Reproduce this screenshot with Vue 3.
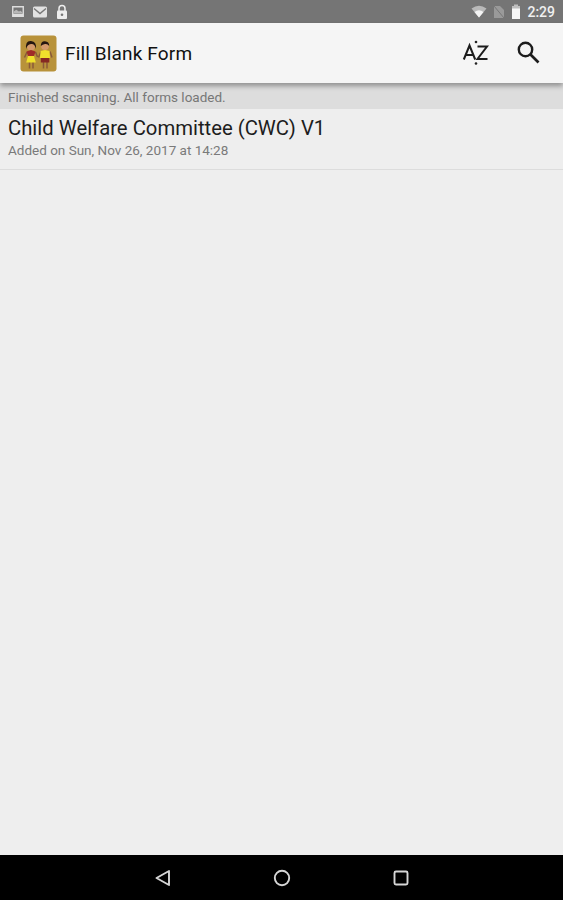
<template>
  <div class="screen">
    <div class="status-bar">
      <div class="status-left">
        <svg width="14" height="13" viewBox="0 0 16 14"><path d="M2 1.500h12v11H2z" fill="none" stroke="#dedede" stroke-width="1.600"/><path d="M3 7l3-2 3 2 2-1 2 2v1H3z" fill="#b8b8b8"/><path d="M2 9.500h12v3H2z" fill="#dedede"/></svg>
        <svg width="16" height="14" viewBox="0 0 16 14"><rect x="1" y="1.500" width="14" height="11" rx="1.500" fill="#e2e2e2"/><path d="M2 3.500l6 5 6-5" fill="none" stroke="#777" stroke-width="1.400"/></svg>
        <svg width="14" height="16" viewBox="0 0 14 16"><path d="M4 7V4.500a3 3 0 0 1 6 0V7" fill="none" stroke="#eee" stroke-width="1.500"/><rect x="2" y="6.500" width="10" height="8.500" rx="1" fill="#eee"/><circle cx="7" cy="10.700" r="1.300" fill="#777"/></svg>
      </div>
      <div class="status-right">
        <svg width="16" height="13" viewBox="0 0 16 13"><path d="M0.500 3.500Q8-2 15.500 3.500L8 12.500z" fill="#f0f0f0" opacity=".55"/><path d="M3.500 7Q8 3.500 12.500 7L8 12.500z" fill="#f4f4f4"/></svg>
        <svg width="12" height="14" viewBox="0 0 12 14"><path d="M1 13V1h6l4 4v8z" fill="#9a9a9a"/><path d="M1 1l10 12" stroke="#777" stroke-width="1"/></svg>
        <svg width="10" height="15" viewBox="0 0 10 15"><path d="M3 0.500h4V2h2v13H1V2h2z" fill="#bdbdbd"/><rect x="1" y="4.500" width="8" height="10.500" fill="#f6f6f6"/></svg>
        <span class="clock">2:29</span>
      </div>
    </div>

    <header class="toolbar">
      <div class="app-icon">
        <svg width="37" height="37" viewBox="0 0 37 37">
          <rect x="0.500" y="0.500" width="36" height="36" rx="3" fill="#b8923a"/>
          <path d="M9.500 27v6.500M13 27v6.500M7 17l-2.500 5.500M15.500 17l2 5" stroke="#8a5a38" stroke-width="1.500"/>
          <path d="M23.500 27v6.500M27 27v6.500M21 16.500l-2.500 6M30 16.500l2 6" stroke="#8a5a38" stroke-width="1.500"/>
          <circle cx="11" cy="11.500" r="4" fill="#d49a6c"/>
          <path d="M6.200 14Q5 5.500 11 6T15.800 14Q15 8.500 11 9T6.200 14z" fill="#241610"/>
          <path d="M6.500 16.500l4.500-1.500 4.500 1.500-1.500 4.500H8z" fill="#a02c28"/>
          <path d="M8 21h6l1.800 6.500h-9.600z" fill="#f0e02c"/>
          <circle cx="25" cy="11" r="3.900" fill="#d49a6c"/>
          <path d="M20.800 11Q20.800 6 25 6.300T29.200 11Q27.500 8.500 25 9T20.800 11z" fill="#241610"/>
          <path d="M20.500 16l4.500-1 4.500 1 .5 7h-10z" fill="#f0e02c"/>
          <path d="M20.800 23h8.500v4.500h-8.500z" fill="#862822"/>
        </svg>
      </div>
      <h1 class="title">Fill Blank Form</h1>
      <div class="actions">
        <div class="sort-icon">
          <svg width="28" height="28" viewBox="0 0 28 28">
            <circle cx="14" cy="3" r="1.300" fill="#222"/>
            <circle cx="14" cy="24.500" r="1.300" fill="#222"/>
            <path d="M1.800 20.500L7.500 6.500 13.200 20.500M3.800 16h7.400" fill="none" stroke="#1c1c1c" stroke-width="2"/>
            <path d="M15.500 7.500h9.500L15.500 20h10" fill="none" stroke="#1c1c1c" stroke-width="2"/>
          </svg>
        </div>
        <svg class="search-icon" width="26" height="26" viewBox="0 0 26 26">
          <circle cx="10.500" cy="10.500" r="6.700" fill="none" stroke="#1c1c1c" stroke-width="2.400"/>
          <path d="M15.500 15.500l8 8" stroke="#1c1c1c" stroke-width="2.600"/>
        </svg>
      </div>
    </header>

    <div class="notice">Finished scanning. All forms loaded.</div>

    <main class="list">
      <div class="form-row">
        <div class="form-name">Child Welfare Committee (CWC) V1</div>
        <div class="form-date">Added on Sun, Nov 26, 2017 at 14:28</div>
      </div>
    </main>

    <nav class="nav-bar">
      <svg width="18" height="18" viewBox="0 0 18 18"><path d="M15 2L2.500 9 15 16z" fill="none" stroke="#d6d6d6" stroke-width="1.900" stroke-linejoin="round"/></svg>
      <svg width="18" height="18" viewBox="0 0 18 18"><circle cx="9" cy="9" r="7.200" fill="none" stroke="#d6d6d6" stroke-width="1.900"/></svg>
      <svg width="18" height="18" viewBox="0 0 18 18"><rect x="2.500" y="2.500" width="13" height="13" rx="1.500" fill="none" stroke="#d6d6d6" stroke-width="1.900"/></svg>
    </nav>
  </div>
</template>

<script setup>
</script>

<style>
html, body {
  margin: 0;
  background: #eeeeee;
}
</style>

<style scoped>
.screen {
  width: 563px;
  height: 900px;
  display: flex;
  flex-direction: column;
  overflow: hidden;
  background: #eeeeee;
  font-family: Roboto, "Liberation Sans", sans-serif;
}

.status-bar {
  height: 23px;
  flex: none;
  display: flex;
  align-items: center;
  justify-content: space-between;
  padding: 0 8px 0 11px;
  background: #757575;
}

.status-left,
.status-right {
  display: flex;
  align-items: center;
}

.status-left {
  gap: 7px;
}

.status-right {
  gap: 6px;
}

.clock {
  color: #f0f0f0;
  font-size: 14px;
  font-weight: 500;
}

.toolbar {
  height: 60px;
  flex: none;
  display: flex;
  align-items: center;
  padding: 0 22px 0 20px;
  background: #f5f5f5;
  box-shadow: 0 3px 5px rgba(0, 0, 0, 0.35);
  position: relative;
}

.app-icon {
  width: 37px;
  height: 37px;
  margin-right: 8px;
}

.title {
  flex: 1;
  margin: 1px 0 0;
  font-size: 19px;
  font-weight: 400;
  letter-spacing: 0.15px;
  color: #111111;
}

.actions {
  display: flex;
  align-items: center;
  gap: 25px;
}

.sort-icon {
  height: 28px;
  margin-top: 0;
}

.search-icon {
  margin-top: -2px;
}

.notice {
  height: 26px;
  flex: none;
  padding-left: 8px;
  line-height: 28px;
  font-size: 13.500px;
  color: #777777;
  background: #dddddd;
}

.list {
  flex: 1;
}

.form-row {
  height: 61px;
  box-sizing: border-box;
  padding: 7px 8px 0;
  border-bottom: 1px solid #dcdcdc;
}

.form-name {
  font-size: 20.300px;
  line-height: 24px;
  color: #1d1d1d;
}

.form-date {
  margin-top: 2px;
  font-size: 13.500px;
  line-height: 16px;
  color: #7a7a7a;
}

.nav-bar {
  height: 45px;
  flex: none;
  display: flex;
  align-items: center;
  justify-content: center;
  gap: 101px;
  background: #000000;
}
</style>
